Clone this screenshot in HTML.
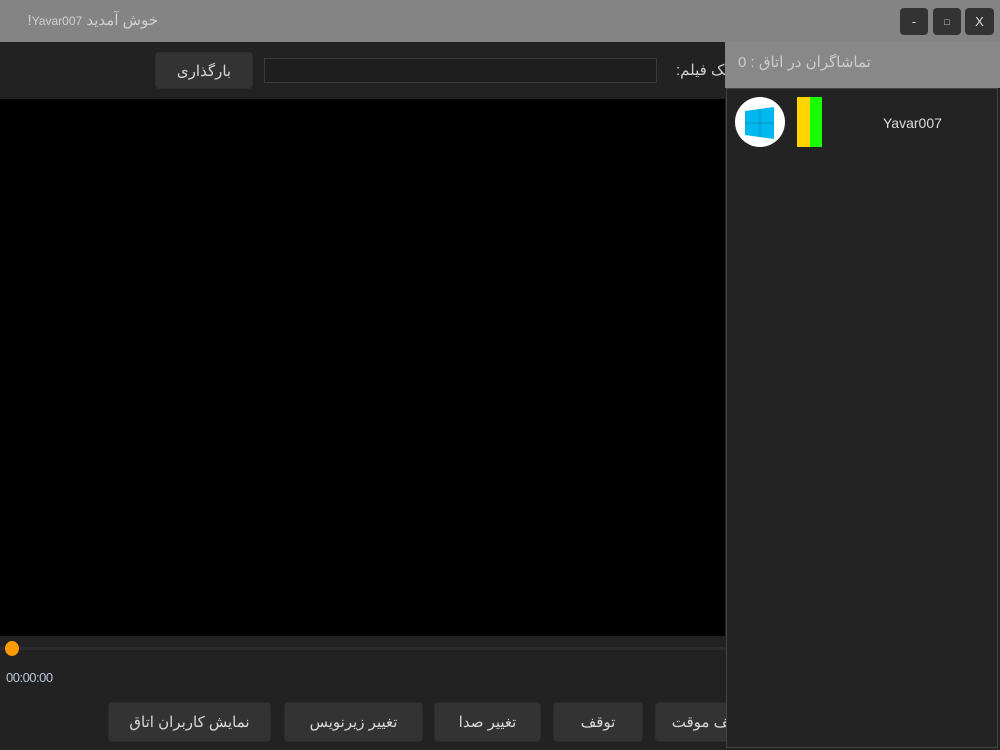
<!DOCTYPE html>
<html><head><meta charset="utf-8"><style>
*{margin:0;padding:0;box-sizing:border-box}
body{width:1000px;height:750px;background:#222;position:relative;overflow:hidden;font-family:"Liberation Sans","Noto Sans CJK SC",sans-serif;color:#d0d0d0}
.abs{position:absolute}
.btn{position:absolute;background:#333;border:1px solid #2c2c2c;border-radius:4px;color:#d8d8d8;font-size:15px;display:flex;align-items:center;justify-content:center;direction:rtl}
.wb{position:absolute;top:8px;width:28px;height:27px;background:#333;border-radius:4px;color:#ddd;font-size:13px;display:flex;align-items:center;justify-content:center}
</style></head><body>
<div class="abs" style="left:0;top:0;width:1000px;height:42px;background:#848484"></div>
<div class="abs" style="left:6px;top:11px;width:152px;font-size:15px;color:#d0d0d0;direction:rtl;text-align:right">خوش آمدید <span style="font-size:12px">Yavar007</span>!</div>
<div class="wb" style="left:900px">-</div>
<div class="wb" style="left:933px;font-size:9px">□</div>
<div class="wb" style="left:965px;width:29px">X</div>

<div class="btn" style="left:155px;top:52px;width:98px;height:37px">بارگذاری</div>
<div class="abs" style="left:264px;top:58px;width:393px;height:25px;background:#1e1e1e;border:1px solid #3a3a3a"></div>
<div class="abs" style="right:262px;top:61px;font-size:15px;direction:rtl;white-space:nowrap">لینک فیلم:</div>

<div class="abs" style="left:0;top:99px;width:725px;height:537px;background:#000"></div>
<div class="abs" style="left:0;top:647px;width:725px;height:3px;background:#2c2c2c"></div>
<div class="abs" style="left:5px;top:641px;width:14px;height:15px;border-radius:50%;background:#ff9a00"></div>
<div class="abs" style="left:6px;top:670px;font-size:13px;color:#b8c8d8;letter-spacing:-0.5px">00:00:00</div>

<div class="btn" style="left:108px;top:702px;width:163px;height:40px">نمایش کاربران اتاق</div>
<div class="btn" style="left:284px;top:702px;width:139px;height:40px">تغییر زیرنویس</div>
<div class="btn" style="left:434px;top:702px;width:107px;height:40px">تغییر صدا</div>
<div class="btn" style="left:553px;top:702px;width:90px;height:40px">توقف</div>
<div class="btn" style="left:655px;top:702px;width:110px;height:40px">توقف موقت</div>

<div class="abs" style="left:725px;top:42px;width:275px;height:46px;background:#888"></div>
<div class="abs" style="left:738px;top:53px;font-size:15px;color:#ccc;direction:rtl">تماشاگران در اتاق : 0</div>
<div class="abs" style="left:726px;top:88px;width:272px;height:660px;background:#232323;border:1px solid #444"></div>
<div class="abs" style="left:735px;top:97px;width:50px;height:50px;border-radius:50%;background:#fff"></div>
<svg class="abs" style="left:743px;top:106px" width="34" height="34" viewBox="0 0 34 34"><path d="M2 5 L31 1 V33 L2 29Z" fill="#00b8f0"/><path d="M2 17 H31 M17 3 V31" stroke="#0090c0" stroke-width="1"/></svg>
<div class="abs" style="left:797px;top:97px;width:13px;height:50px;background:#ffd400"></div>
<div class="abs" style="left:810px;top:97px;width:12px;height:50px;background:#17ff00"></div>
<div class="abs" style="left:883px;top:115px;font-size:14px;color:#ddd">Yavar007</div>
</body></html>
